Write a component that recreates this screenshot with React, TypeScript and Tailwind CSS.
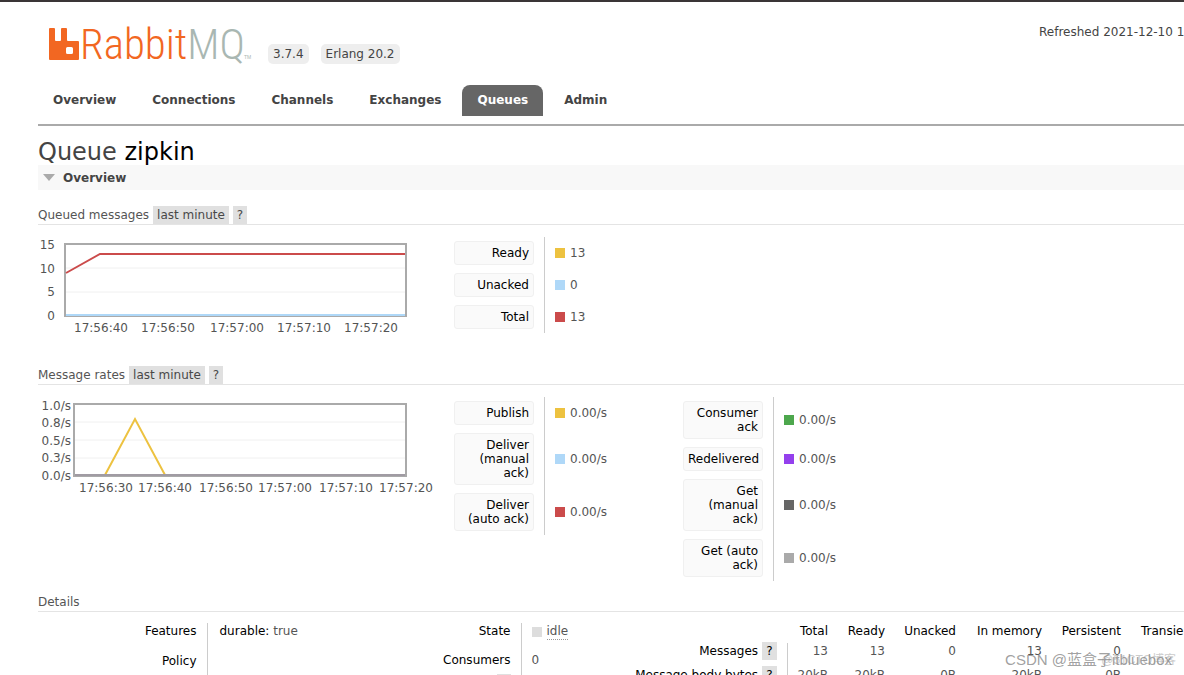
import React from 'react'

interface LegendRow {
  label: string
  value: string
  color: string
}

interface ChartLine {
  color: string
  points: string
}

interface ChartProps {
  title: string
  left: number
  yLabels: { text: string; y: number }[]
  xLabels: { text: string; x: number }[]
  grid: number[]
  lines: ChartLine[]
}

const tabs = ['Overview', 'Connections', 'Channels', 'Exchanges', 'Queues', 'Admin']

const queuedLegend: LegendRow[] = [
  { label: 'Ready', value: '13', color: 'bg-[#edc240]' },
  { label: 'Unacked', value: '0', color: 'bg-[#afd8f8]' },
  { label: 'Total', value: '13', color: 'bg-[#cb4b4b]' },
]

const ratesLegend: LegendRow[] = [
  { label: 'Publish', value: '0.00/s', color: 'bg-[#edc240]' },
  { label: 'Deliver (manual ack)', value: '0.00/s', color: 'bg-[#afd8f8]' },
  { label: 'Deliver (auto ack)', value: '0.00/s', color: 'bg-[#cb4b4b]' },
]

const ackLegend: LegendRow[] = [
  { label: 'Consumer ack', value: '0.00/s', color: 'bg-[#4da74d]' },
  { label: 'Redelivered', value: '0.00/s', color: 'bg-[#9440ed]' },
  { label: 'Get (manual ack)', value: '0.00/s', color: 'bg-[#666666]' },
  { label: 'Get (auto ack)', value: '0.00/s', color: 'bg-[#aaaaaa]' },
]

const stats = [
  { label: 'Messages', values: ['13', '13', '0', '13', '0'] },
  { label: 'Message body bytes', values: ['20kB', '20kB', '0B', '20kB', '0B'] },
]

const Logo = () => (
  <svg className="w-[206px] h-10" viewBox="0 0 206 40" role="img" aria-label="RabbitMQ">
    <path
      fill="#f26722"
      fillRule="evenodd"
      d="M2 4h4q1 0 1 1v11q0 1 1 1h4q1 0 1-1v-11q0-1 1-1h4q1 0 1 1v11q0 1 1 1h10q1 0 1 1v17q0 1-1 1h-28q-1 0-1-1v-30q0-1 1-1zM19.500 23q-1.500 0-1.500 1.500v4q0 1.500 1.500 1.500h4q1.500 0 1.500-1.500v-4q0-1.500-1.500-1.500z"
    />
    <text
      x="32"
      y="35"
      fontSize="43"
      fontWeight="300"
      fontFamily="'Roboto Condensed', 'Roboto Condensed Light', 'Open Sans Condensed Light', sans-serif"
      fill="#f26722"
    >
      Rabbit<tspan fill="#a9b7b2">MQ</tspan>
    </text>
    <text x="196" y="35" fontSize="5" fontFamily="'Liberation Sans', sans-serif" fill="#a9b7b2">
      TM
    </text>
  </svg>
)

const SectionHeading = ({ title, range }: { title: string; range?: string }) => (
  <h3 className="flex items-center gap-1 h-[19px] border-b border-[#e4e4e4] text-[#555]">
    <span>{title}</span>
    {range && (
      <>
        <button className="h-[18px] px-1 bg-[#e0e0e0] text-[#484848]">{range}</button>
        <button className="h-[18px] px-1 bg-[#e0e0e0] text-[#484848]">?</button>
      </>
    )}
  </h3>
)

const Chart = ({ title, left, yLabels, xLabels, grid, lines }: ChartProps) => (
  <svg className="w-[416px] h-24 shrink-0 overflow-visible" viewBox="0 0 416 96" role="img" aria-label={title}>
    {grid.map((y) => (
      <line key={y} x1={left} x2="369" y1={y} y2={y} stroke="#f0f0f0" strokeWidth="1" />
    ))}
    <rect x={left} y="7" width={368 - left} height="72" fill="none" stroke="#aaa" strokeWidth="2" />
    {lines.map((line) => (
      <polyline key={line.color} points={line.points} fill="none" stroke={line.color} strokeWidth="2" />
    ))}
    <g fill="#545454" fontSize="12">
      {yLabels.map((l) => (
        <text key={l.text} x={left === 27 ? 17 : 33} y={l.y} textAnchor="end">
          {l.text}
        </text>
      ))}
      {xLabels.map((l) => (
        <text key={l.text} x={l.x} y="95" textAnchor="middle">
          {l.text}
        </text>
      ))}
    </g>
  </svg>
)

const Legend = ({ rows }: { rows: LegendRow[] }) => (
  <table className="border-collapse">
    <tbody>
      {rows.map((row) => (
        <tr key={row.label}>
          <th scope="row" className="py-1 pr-[10px] font-normal text-black">
            <div className="w-20 px-1 py-1 border border-[#f0f0f0] rounded-[3px] bg-[#fafafa] text-right leading-[14px]">
              {row.label}
            </div>
          </th>
          <td className="border-l border-[#ccc] pl-[10px]">
            <div className="flex items-center gap-[5px] text-[#555]">
              <span className={`w-[10px] h-[10px] ${row.color}`} />
              {row.value}
            </div>
          </td>
        </tr>
      ))}
    </tbody>
  </table>
)

const App = () => {
  return (
    <div
      className="h-screen overflow-hidden relative bg-white border-t-2 border-[#3a3536] pl-[38px] text-xs leading-4 text-[#444]"
      style={{ fontFamily: "Verdana, 'DejaVu Sans', sans-serif" }}
    >
      {/* Header */}
      <header className="border-b-2 border-[#aaa] pt-[22px] pb-2">
        <div className="flex items-start justify-between">
          <div className="flex items-end pl-[10px]">
            <Logo />
            <span className="ml-[14px] px-[5px] py-[2px] rounded-[5px] bg-[#eee]">3.7.4</span>
            <span className="ml-3 px-[5px] py-[2px] rounded-[5px] bg-[#eee]">Erlang 20.2</span>
          </div>
          <div className="w-[145px] shrink-0 whitespace-nowrap overflow-hidden">Refreshed 2021-12-10 17:57:25</div>
        </div>
        <nav className="flex gap-[6px] mt-[21px]">
          {tabs.map((tab) => (
            <a
              key={tab}
              href="#"
              className={
                tab === 'Queues'
                  ? 'px-[15px] leading-[31px] font-bold rounded-t-lg bg-[#666] text-white'
                  : 'px-[15px] leading-[31px] font-bold text-[#444]'
              }
            >
              {tab}
            </a>
          ))}
        </nav>
      </header>

      <main>
        <h1 className="pt-[14px] text-2xl leading-[25px] text-[#444]">
          Queue <b className="font-normal text-black">zipkin</b>
        </h1>
        <h2>
          <button className="flex items-center w-full h-[25px] pl-[5px] gap-2 bg-[#f8f8f8] font-bold">
            <svg className="w-3 h-[7px]" viewBox="0 0 12 7">
              <path d="M0 0h12l-6 7z" fill="#aaa" />
            </svg>
            Overview
          </button>
        </h2>

        {/* Queued messages */}
        <section className="mt-4">
          <SectionHeading title="Queued messages" range="last minute" />
          <div className="flex items-start pt-3">
            <Chart
              title="Queued messages"
              left={27}
              yLabels={[
                { text: '15', y: 12 },
                { text: '10', y: 36 },
                { text: '5', y: 59 },
                { text: '0', y: 83 },
              ]}
              xLabels={[
                { text: '17:56:40', x: 63 },
                { text: '17:56:50', x: 130 },
                { text: '17:57:00', x: 199 },
                { text: '17:57:10', x: 266 },
                { text: '17:57:20', x: 333 },
              ]}
              grid={[31, 55]}
              lines={[
                { color: '#afd8f8', points: '28,78 367,78' },
                { color: '#cb4b4b', points: '28,36 62,17 367,17' },
              ]}
            />
            <Legend rows={queuedLegend} />
          </div>
        </section>

        {/* Message rates */}
        <section className="mt-[33px]">
          <SectionHeading title="Message rates" range="last minute" />
          <div className="flex items-start pt-3">
            <Chart
              title="Message rates"
              left={36}
              yLabels={[
                { text: '1.0/s', y: 13 },
                { text: '0.8/s', y: 30 },
                { text: '0.5/s', y: 48 },
                { text: '0.3/s', y: 65 },
                { text: '0.0/s', y: 83 },
              ]}
              xLabels={[
                { text: '17:56:30', x: 68 },
                { text: '17:56:40', x: 127 },
                { text: '17:56:50', x: 188 },
                { text: '17:57:00', x: 247 },
                { text: '17:57:10', x: 308 },
                { text: '17:57:20', x: 368 },
              ]}
              grid={[25, 43, 61]}
              lines={[
                { color: '#edc240', points: '67,78 97,22 127,78' },
                { color: '#a09ba3', points: '37,78 367,78' },
              ]}
            />
            <div className="w-[229px] shrink-0">
              <Legend rows={ratesLegend} />
            </div>
            <Legend rows={ackLegend} />
          </div>
        </section>

        {/* Details */}
        <section className="mt-3">
          <SectionHeading title="Details" />
          <div className="flex items-start pt-[11px]">
            <table className="table-fixed border-collapse w-[261px] shrink-0">
              <tbody>
                <tr className="h-[30px] align-top">
                  <th scope="row" className="w-[169px] pr-[10px] font-normal text-right text-black">Features</th>
                  <td className="border-l border-[#ccc] pl-3 whitespace-nowrap text-black">
                    durable: <span className="text-[#555]">true</span>
                  </td>
                </tr>
                <tr className="h-[30px] align-top">
                  <th scope="row" className="pr-[10px] font-normal text-right text-black">Policy</th>
                  <td className="border-l border-[#ccc]" />
                </tr>
              </tbody>
            </table>
            <table className="table-fixed border-collapse w-[283px] shrink-0">
              <tbody>
                <tr className="h-[29px] align-top">
                  <th scope="row" className="w-[222px] pr-[10px] font-normal text-right text-black">State</th>
                  <td className="border-l border-[#ccc] pl-[10px]">
                    <div className="flex items-center gap-[5px] text-[#555]">
                      <span className="w-[10px] h-[10px] bg-[#ddd]" />
                      <abbr title="Idle" className="no-underline border-b border-dotted border-[#999]">idle</abbr>
                    </div>
                  </td>
                </tr>
                <tr className="h-[22px] align-top">
                  <th scope="row" className="pr-[10px] font-normal text-right text-black">Consumers</th>
                  <td className="border-l border-[#ccc] pl-[10px] text-[#555]">0</td>
                </tr>
                <tr className="align-top">
                  <th scope="row" className="pr-[10px] font-normal">
                    <div className="flex justify-end">
                      <button aria-label="Help" className="w-[14px] h-[18px] bg-[#e0e0e0]" />
                    </div>
                  </th>
                  <td className="border-l border-[#ccc]" />
                </tr>
              </tbody>
            </table>
            <table className="table-fixed border-collapse w-[640px] shrink-0 whitespace-nowrap text-right">
              <thead>
                <tr className="h-5 align-top text-black">
                  <td className="w-[205px]" />
                  <th scope="col" className="w-[41px] font-normal">Total</th>
                  <th scope="col" className="w-[57px] font-normal">Ready</th>
                  <th scope="col" className="w-[71px] font-normal">Unacked</th>
                  <th scope="col" className="w-[86px] font-normal">In memory</th>
                  <th scope="col" className="w-[79px] font-normal">Persistent</th>
                  <th scope="col" className="pl-5 text-left font-normal">Transient</th>
                </tr>
              </thead>
              <tbody className="text-[#555]">
                {stats.map((row) => (
                  <tr key={row.label} className="h-6 align-top">
                    <th scope="row" className="pr-[10px] border-r border-[#ccc] font-normal text-black">
                      <div className="flex items-center justify-end gap-1 h-4">
                        {row.label}
                        <button className="h-[18px] px-1 bg-[#e0e0e0]">?</button>
                      </div>
                    </th>
                    {row.values.map((value, i) => (
                      <td key={i}>{value}</td>
                    ))}
                  </tr>
                ))}
              </tbody>
            </table>
          </div>
        </section>
      </main>

      {/* Watermarks over the page */}
      <div
        className="absolute right-2 bottom-[5px] text-xs leading-5 text-[#ccc]"
        style={{ fontFamily: "'Liberation Sans', 'Noto Sans CJK SC', sans-serif" }}
      >
        @51CTO博客
      </div>
      <div
        className="absolute right-3 bottom-[5px] text-[15px] leading-5 text-[#888]/80"
        style={{ fontFamily: "'Liberation Sans', 'Noto Sans CJK SC', sans-serif" }}
      >
        CSDN @蓝盒子itbluebox
      </div>
    </div>
  )
}

export default App
